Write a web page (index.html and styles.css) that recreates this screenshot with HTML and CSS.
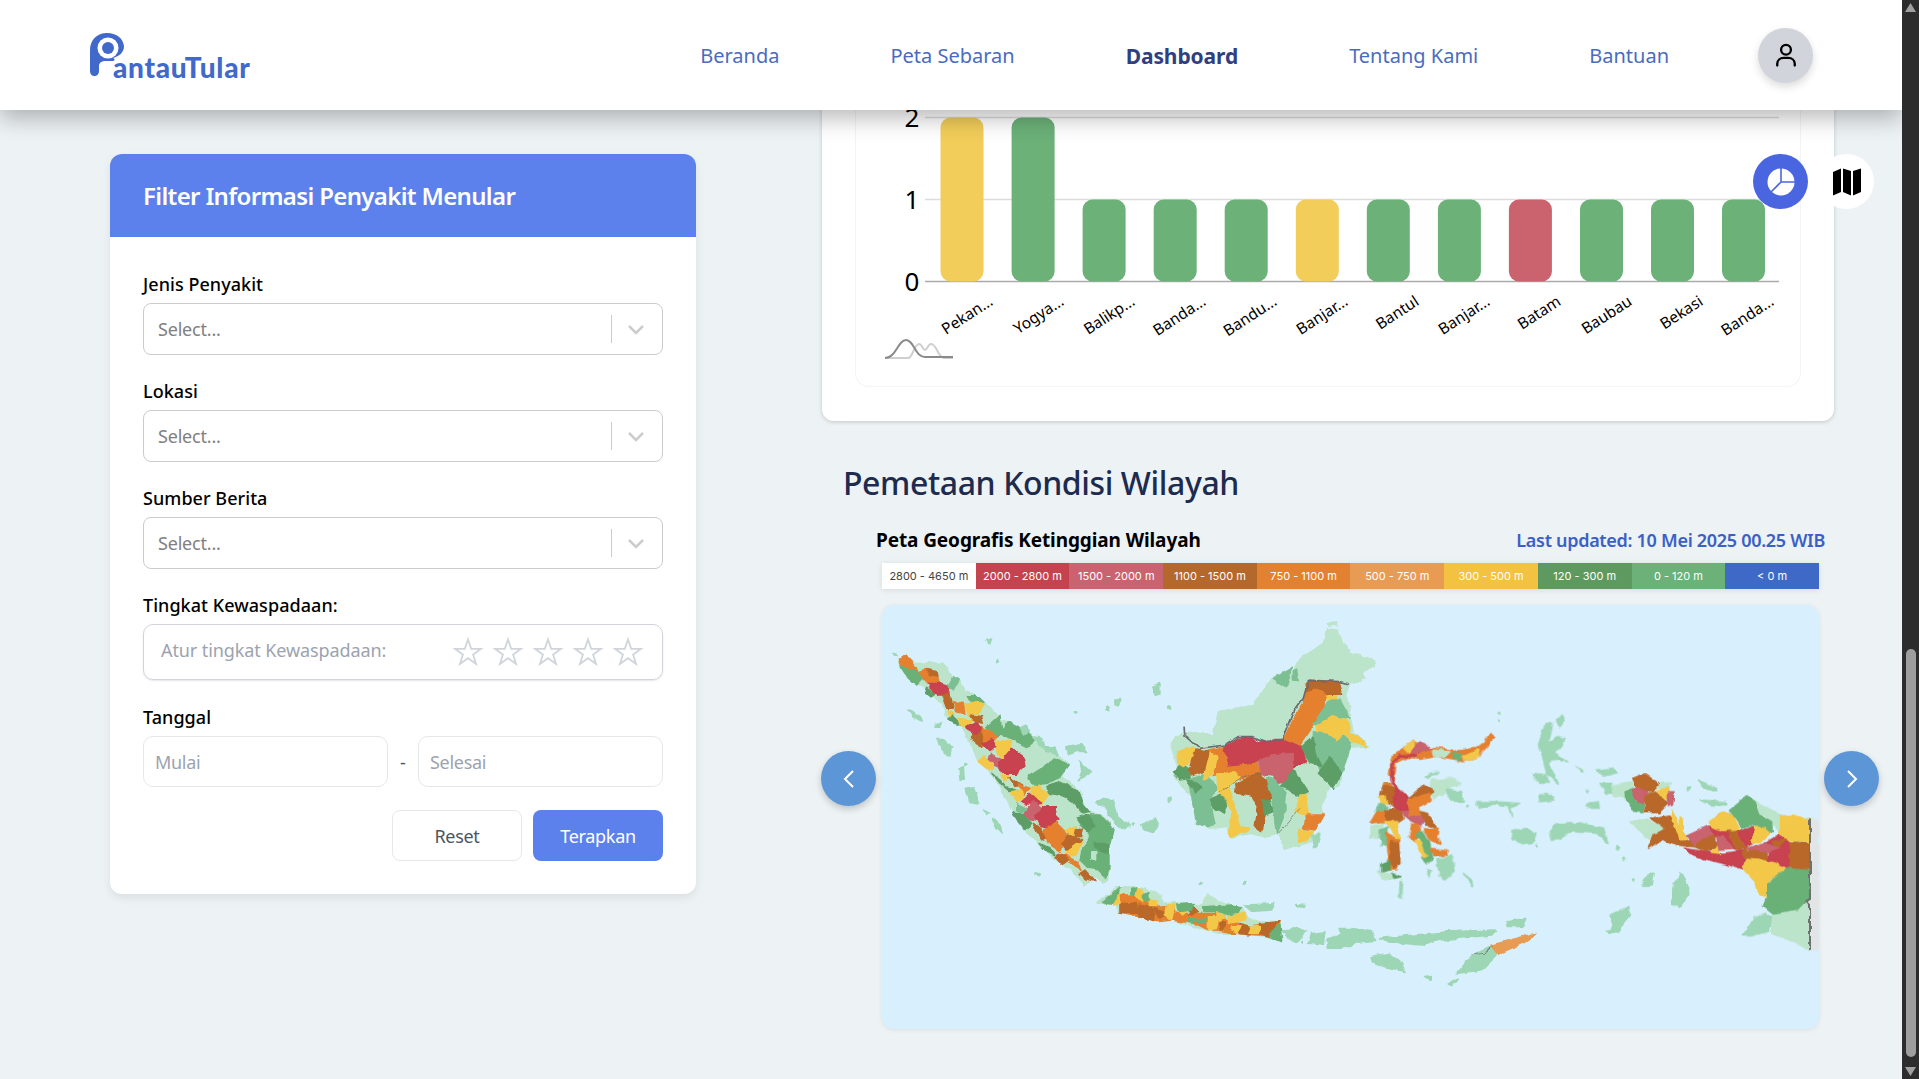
FILE: index.html
```html
<!DOCTYPE html>
<html lang="id">
<head>
<meta charset="utf-8">
<title>PantauTular - Dashboard</title>
<link rel="stylesheet" href="styles.css">
</head>
<body>
<div class="window">
  <div class="viewport">
    <header class="topbar">
      <a class="logo">
        <svg class="logo-mark" viewBox="0 0 36 44" width="36" height="44" aria-hidden="true">
          <path class="logo-blue" d="M18 0C8 0 1 7 1 17V38C1 41 3 43 5.500 43C8 43 10 41 10 38V32C11 29 13 28 16 28H24C26 28 26 25 24 25C30 23 35 20 35 13C34 5 27 0 18 0Z"/>
          <circle cx="19" cy="15" r="10.500" fill="#fff"/>
          <circle cx="19" cy="15" r="6" class="logo-blue"/>
        </svg>
        <span class="logo-text">antauTular</span>
      </a>
      <nav class="nav">
        <a class="nav-link">Beranda</a>
        <a class="nav-link">Peta Sebaran</a>
        <a class="nav-link active">Dashboard</a>
        <a class="nav-link">Tentang Kami</a>
        <a class="nav-link">Bantuan</a>
      </nav>
      <div class="avatar">
        <svg viewBox="0 0 24 24" width="28" height="28" fill="none" stroke="#000" stroke-width="2" stroke-linecap="round" aria-hidden="true"><circle cx="12" cy="7.500" r="4.200"/><path d="M4.500 21V19.500C4.500 16.500 7 14.500 10 14.500H14C17 14.500 19.500 16.500 19.500 19.500V21"/></svg>
      </div>
    </header>

    <main class="content">
      <aside class="filter-panel">
        <h2 class="filter-title">Filter Informasi Penyakit Menular</h2>
        <form class="filter-body">
          <div class="field">
            <label class="field-label">Jenis Penyakit</label>
            <div class="select"><span class="select-text">Select...</span><span class="select-sep"></span><svg class="chev" viewBox="0 0 20 20" width="20" height="20" aria-hidden="true"><path d="M3 7L10 14L17 7"/></svg></div>
          </div>
          <div class="field">
            <label class="field-label">Lokasi</label>
            <div class="select"><span class="select-text">Select...</span><span class="select-sep"></span><svg class="chev" viewBox="0 0 20 20" width="20" height="20" aria-hidden="true"><path d="M3 7L10 14L17 7"/></svg></div>
          </div>
          <div class="field">
            <label class="field-label">Sumber Berita</label>
            <div class="select"><span class="select-text">Select...</span><span class="select-sep"></span><svg class="chev" viewBox="0 0 20 20" width="20" height="20" aria-hidden="true"><path d="M3 7L10 14L17 7"/></svg></div>
          </div>
          <div class="field">
            <label class="field-label">Tingkat Kewaspadaan:</label>
            <div class="rating">
              <span class="rating-text">Atur tingkat Kewaspadaan:</span>
              <div class="stars">
                <svg class="star" viewBox="0 0 30 30" width="30" height="30" aria-hidden="true"><path d="M15 2.500L18.200 11.800H28L20.100 17.600L23.100 27L15 21.200L6.900 27L9.900 17.600L2 11.800H11.800Z"/></svg>
                <svg class="star" viewBox="0 0 30 30" width="30" height="30" aria-hidden="true"><path d="M15 2.500L18.200 11.800H28L20.100 17.600L23.100 27L15 21.200L6.900 27L9.900 17.600L2 11.800H11.800Z"/></svg>
                <svg class="star" viewBox="0 0 30 30" width="30" height="30" aria-hidden="true"><path d="M15 2.500L18.200 11.800H28L20.100 17.600L23.100 27L15 21.200L6.900 27L9.900 17.600L2 11.800H11.800Z"/></svg>
                <svg class="star" viewBox="0 0 30 30" width="30" height="30" aria-hidden="true"><path d="M15 2.500L18.200 11.800H28L20.100 17.600L23.100 27L15 21.200L6.900 27L9.900 17.600L2 11.800H11.800Z"/></svg>
                <svg class="star" viewBox="0 0 30 30" width="30" height="30" aria-hidden="true"><path d="M15 2.500L18.200 11.800H28L20.100 17.600L23.100 27L15 21.200L6.900 27L9.900 17.600L2 11.800H11.800Z"/></svg>
              </div>
            </div>
          </div>
          <div class="field field-date">
            <label class="field-label">Tanggal</label>
            <div class="date-row">
              <div class="date-input">Mulai</div>
              <span class="date-sep">-</span>
              <div class="date-input">Selesai</div>
            </div>
          </div>
          <div class="actions">
            <button class="btn btn-reset" type="button">Reset</button>
            <button class="btn btn-apply" type="button">Terapkan</button>
          </div>
        </form>
      </aside>

      <section class="right-col">
        <div class="chart-card">
          <div class="chart-inner">
            <svg class="chart" viewBox="855 0 946 387" width="946" height="387" role="img" aria-label="Grafik batang">
              <line class="grid grid-top" x1="925" y1="117.500" x2="1779" y2="117.500"/>
              <line class="grid" x1="925" y1="199.500" x2="1779" y2="199.500"/>
              <line class="axis" x1="925" y1="281.500" x2="1779" y2="281.500"/>
              <text class="ytick" x="912" y="126.500">2</text>
              <text class="ytick" x="912" y="208.500">1</text>
              <text class="ytick" x="912" y="290.500">0</text>
              <rect class="bar-y" x="940.500" y="117.500" width="43" height="164" rx="10"/>
              <rect class="bar-g" x="1011.600" y="117.500" width="43" height="164" rx="10"/>
              <rect class="bar-g" x="1082.600" y="199.500" width="43" height="82" rx="10"/>
              <rect class="bar-g" x="1153.700" y="199.500" width="43" height="82" rx="10"/>
              <rect class="bar-g" x="1224.700" y="199.500" width="43" height="82" rx="10"/>
              <rect class="bar-y" x="1295.800" y="199.500" width="43" height="82" rx="10"/>
              <rect class="bar-g" x="1366.800" y="199.500" width="43" height="82" rx="10"/>
              <rect class="bar-g" x="1437.900" y="199.500" width="43" height="82" rx="10"/>
              <rect class="bar-r" x="1508.900" y="199.500" width="43" height="82" rx="10"/>
              <rect class="bar-g" x="1580" y="199.500" width="43" height="82" rx="10"/>
              <rect class="bar-g" x="1651" y="199.500" width="43" height="82" rx="10"/>
              <rect class="bar-g" x="1722" y="199.500" width="43" height="82" rx="10"/>
              <text class="xtick" transform="translate(994 304) rotate(-33)">Pekan...</text>
              <text class="xtick" transform="translate(1065 304) rotate(-33)">Yogya...</text>
              <text class="xtick" transform="translate(1136 304) rotate(-33)">Balikp...</text>
              <text class="xtick" transform="translate(1207 304) rotate(-33)">Banda...</text>
              <text class="xtick" transform="translate(1278 304) rotate(-33)">Bandu...</text>
              <text class="xtick" transform="translate(1349 304) rotate(-33)">Banjar...</text>
              <text class="xtick" transform="translate(1420 304) rotate(-33)">Bantul</text>
              <text class="xtick" transform="translate(1491 304) rotate(-33)">Banjar...</text>
              <text class="xtick" transform="translate(1562 304) rotate(-33)">Batam</text>
              <text class="xtick" transform="translate(1633 304) rotate(-33)">Baubau</text>
              <text class="xtick" transform="translate(1704 304) rotate(-33)">Bekasi</text>
              <text class="xtick" transform="translate(1775 304) rotate(-33)">Banda...</text>
              <path class="bell-light" d="M885 358H908C913 358 914 344 919 344C922 344 923 350 925 350C927 350 928 344 931 344C937 344 938 358 944 358H953"/>
              <path class="bell-dark" d="M885 358C896 358 898 340 906 340C914 340 915 357 925 357H953"/>
            </svg>
          </div>
          <div class="view-switch">
            <button class="view-btn view-btn-on" type="button" aria-label="Grafik">
              <svg viewBox="0 0 28 28" width="28" height="28" aria-hidden="true"><circle cx="14" cy="14" r="13.500" fill="#fff"/><path d="M14 0V14L4 24M14 14H28" stroke="#4a65e0" stroke-width="1.600" fill="none"/></svg>
            </button>
            <button class="view-btn" type="button" aria-label="Peta">
              <svg viewBox="0 0 28 28" width="28" height="28" aria-hidden="true"><path d="M0 4L8 0.500V24L0 27.500ZM10 0.500L18 3V27.500L10 24ZM20 3L28 0.500V24L20 27.500Z"/></svg>
            </button>
          </div>
        </div>

        <h2 class="section-title">Pemetaan Kondisi Wilayah</h2>

        <div class="map-block">
          <div class="map-head">
            <h3 class="map-title">Peta Geografis Ketinggian Wilayah</h3>
            <span class="map-updated">Last updated: 10 Mei 2025 00.25 WIB</span>
          </div>
          <ul class="legend">
            <li class="lg lg-1">2800 - 4650 m</li>
            <li class="lg lg-2">2000 - 2800 m</li>
            <li class="lg lg-3">1500 - 2000 m</li>
            <li class="lg lg-4">1100 - 1500 m</li>
            <li class="lg lg-5">750 - 1100 m</li>
            <li class="lg lg-6">500 - 750 m</li>
            <li class="lg lg-7">300 - 500 m</li>
            <li class="lg lg-8">120 - 300 m</li>
            <li class="lg lg-9">0 - 120 m</li>
            <li class="lg lg-10">&lt; 0 m</li>
          </ul>
          <div class="map">
            <svg class="map-svg" viewBox="882 605 937 424" width="937" height="424" role="img" aria-label="Peta Indonesia">
              <defs>
                <filter id="coast" filterUnits="userSpaceOnUse" x="882" y="605" width="937" height="424">
                  <feTurbulence type="fractalNoise" baseFrequency=".11" numOctaves="2" seed="4" result="n"/>
                  <feDisplacementMap in="SourceGraphic" in2="n" scale="5" xChannelSelector="R" yChannelSelector="G" result="d"/>
                  <feGaussianBlur in="d" stdDeviation=".4"/>
                </filter>
              </defs>
              <g filter="url(#coast)">
              <g transform="translate(885 640) scale(.33333)">
                <polygon class="l" points="38,55 60,45 90,70 125,68 175,70 200,105 220,120 240,150 300,190 325,210 345,240 375,250 420,270 450,295 480,320 520,345 550,370 530,410 585,450 590,480 615,515 660,530 685,565 672,620 672,715 660,730 630,710 610,725 600,735 560,690 520,665 470,620 420,570 385,520 345,440 310,390 280,365 255,310 230,260 185,235 180,205 130,150 95,130 45,80"/>
                <polygon class="o" points="40,55 60,45 90,80 100,95 125,88 160,100 165,130 130,130 100,100 70,85 45,72"/>
                <polygon class="b" points="125,90 160,95 162,108 135,105"/>
                <polygon class="g" points="45,75 70,85 100,100 115,115 95,135 70,115"/>
                <polygon class="d" points="125,145 150,160 135,168 120,155"/>
                <polygon class="r" points="130,130 165,130 195,140 190,165 160,165 135,145"/>
                <polygon class="m" points="190,135 205,110 220,120 205,150"/>
                <polygon class="b" points="170,165 195,165 205,205 185,205"/>
                <polygon class="o" points="205,185 235,190 240,220 215,215"/>
                <polygon class="g" points="250,170 280,170 300,190 265,195"/>
                <polygon class="y" points="240,195 270,185 300,195 275,220 250,225"/>
                <polygon class="y" points="190,210 210,220 195,235"/>
                <polygon class="d" points="185,240 205,225 225,255 205,250"/>
                <polygon class="y" points="220,235 260,240 245,260 225,255"/>
                <polygon class="b" points="255,225 290,230 295,250 270,245"/>
                <polygon class="g" points="305,260 345,225 350,275 372,245 400,260 440,290 450,300 425,320 395,305 365,290 345,285 330,290"/>
                <polygon class="o" points="270,270 290,260 310,270 335,290 300,310 285,320"/>
                <polygon class="b" points="255,295 285,265 295,300 285,320"/>
                <polygon class="r" points="245,260 270,245 290,265 275,285 250,270"/>
                <polygon class="r" points="290,310 320,295 332,320 315,335"/>
                <polygon class="p" points="320,340 345,355 345,385 320,375 312,355"/>
                <polygon class="r" points="360,340 380,325 410,345 420,375 395,400 350,400 340,365"/>
                <polygon class="y" points="330,300 380,305 375,325 350,355 335,335"/>
                <polygon class="y" points="280,365 300,350 325,370 325,390 305,385"/>
                <polygon class="d" points="320,400 345,420 360,440 395,450 375,455 345,430"/>
                <polygon class="y" points="345,405 372,405 362,425"/>
                <polygon class="b" points="372,410 410,435 390,440"/>
                <polygon class="o" points="400,435 435,445 420,460"/>
                <polygon class="y" points="380,455 410,450 420,465 400,485 385,475"/>
                <polygon class="g" points="430,410 470,385 520,355 550,375 525,410 490,430 440,435"/>
                <polygon class="d" points="485,440 520,425 580,450 595,490 615,515 590,520 550,475 525,465 490,460"/>
                <polygon class="y" points="435,445 460,435 490,465 470,495 445,465"/>
                <polygon class="r" points="412,480 435,460 470,490 450,495 420,495"/>
                <polygon class="p" points="415,525 445,485 475,510 450,540 430,535"/>
                <polygon class="r" points="450,530 475,500 515,500 510,525 525,540 490,565 465,560"/>
                <polygon class="d" points="380,520 410,520 440,550 420,572"/>
                <polygon class="m" points="395,490 425,505 410,520 395,510"/>
                <polygon class="b" points="445,550 470,570 490,590 470,600"/>
                <polygon class="d" points="465,610 495,625 510,645 480,630"/>
                <polygon class="g" points="575,535 600,525 645,525 685,565 672,620 672,680 665,715 640,690 610,685 585,660 590,635 610,610 610,575 590,560"/>
                <polygon class="d" points="575,535 610,525 630,555 610,575"/>
                <polygon class="d" points="625,610 670,610 670,640 640,630"/>
                <polygon class="l" points="620,635 635,635 635,660 620,655"/>
                <polygon class="o" points="475,570 520,550 550,590 530,620 525,635 490,610"/>
                <polygon class="y" points="545,575 570,560 580,585 560,590"/>
                <polygon class="b" points="575,565 595,570 590,590 570,590"/>
                <polygon class="b" points="530,610 550,585 590,600 545,630"/>
                <polygon class="y" points="540,635 575,610 595,605 575,640 555,650"/>
                <polygon class="o" points="540,645 575,665 590,690 560,670"/>
                <polygon class="b" points="510,650 530,640 550,660 530,675"/>
                <polygon class="b" points="585,700 600,690 630,725 600,715"/>
                <polygon class="i" points="68,210 110,230 115,243 85,232"/>
                <polygon class="i" points="155,295 175,295 200,320 195,345 175,340"/>
                <polygon class="i" points="240,445 265,440 282,490 255,485"/>
                <polygon class="i" points="295,510 315,520 310,525"/>
                <polygon class="i" points="322,535 345,555 352,582 335,565"/>
                <polygon class="i" points="630,490 655,475 685,480 700,530 735,555 710,570 680,540 660,500"/>
                <polygon class="i" points="770,550 810,535 820,555 805,578 775,570"/>
                <polygon class="i" points="545,320 590,310 608,335 575,335 550,345"/>
                <polygon class="i" points="585,365 620,395 595,410 580,420 590,395"/>
                <polygon class="i" points="800,140 825,130 825,160 810,168"/>
                <polygon class="i" points="445,290 470,295 480,320 510,320 520,345 485,335"/>
                <polygon class="i" points="405,265 425,255 430,275 415,285"/>
                <polygon class="i" points="692,180 704,178 702,198 693,196"/>
                <polygon class="i" points="662,198 672,198 672,212 662,212"/>
                <polygon class="i" points="222,385 235,380 238,415 225,418"/>
                <polygon class="i" points="150,250 165,248 165,262 150,262"/>
                <polygon class="i" points="450,698 466,702 464,708 450,704"/>
                <polygon class="i" points="305,0 320,0 315,12"/>
                <circle class="i" cx="338" cy="62" r="4"/>
                <circle class="i" cx="572" cy="215" r="4"/>
                <circle class="i" cx="852" cy="205" r="4"/>
                <circle class="i" cx="850" cy="480" r="4"/>
                <circle class="i" cx="30" cy="42" r="4"/>
                <circle class="i" cx="245" cy="374" r="4"/>
                <circle class="i" cx="745" cy="552" r="3"/>
              </g>
              <g transform="translate(1160 610) scale(.33333)">
                <polygon class="l" points="30,400 70,365 160,375 175,305 280,285 340,200 400,185 420,145 490,100 500,55 530,60 570,130 650,150 640,170 610,185 615,205 570,225 560,260 570,320 580,370 630,410 570,415 545,500 540,525 510,530 480,600 490,615 460,660 455,695 375,720 355,670 310,680 270,670 210,685 205,650 150,655 110,640 95,560 60,520 45,500 50,460"/>
                <polygon class="g2" points="85,510 130,495 175,530 150,570 165,640 145,650 110,640 95,560"/>
                <polygon class="d" points="40,485 65,460 90,480 90,505 60,510"/>
                <polygon class="d" points="80,510 105,515 125,530 105,550"/>
                <polygon class="d" points="150,570 185,555 205,575 190,610 165,600"/>
                <polygon class="y" points="50,430 100,410 110,440 70,470 55,460"/>
                <polygon class="b" points="105,420 145,425 155,440 130,485 95,498 88,475"/>
                <polygon class="o" points="145,420 195,410 200,465 250,460 295,458 300,490 240,510 225,490 175,495 160,500 170,440"/>
                <polygon class="y" points="150,430 172,440 160,495 130,510"/>
                <polygon class="r" points="195,410 235,385 275,380 285,395 320,395 345,385 370,385 425,410 440,455 390,480 400,430 330,435 300,455 250,460 205,465"/>
                <polygon class="p" points="300,455 330,435 400,430 400,480 390,515 355,520 340,495 300,490"/>
                <polygon class="y" points="170,495 225,485 240,505 205,525 240,650 268,655 260,665 208,682 215,610 200,565 175,545"/>
                <polygon class="b" points="225,525 295,490 320,510 335,540 330,570 310,585 320,610 305,665 285,650 295,590 275,560 225,545"/>
                <polygon class="d" points="305,570 330,570 340,605 315,615"/>
                <polygon class="g2" points="320,500 340,505 375,545 375,610 350,675 345,640 340,580"/>
                <polygon class="d" points="365,530 400,480 420,505 445,545 415,555"/>
                <polygon class="y" points="420,555 435,555 447,620 405,605"/>
                <polygon class="o" points="440,615 490,615 465,660 430,655"/>
                <polygon class="y" points="420,660 460,665 440,695 412,700"/>
                <polygon class="i" points="455,680 480,670 470,715 460,712"/>
                <polygon class="o" points="375,385 405,320 430,280 440,225 470,235 500,250 495,285 465,340 420,405"/>
                <polygon class="b" points="435,220 450,210 535,215 545,250 500,250 470,232 440,245"/>
                <polygon class="y" points="500,255 530,255 530,270 500,268"/>
                <polygon class="g2" points="460,340 510,270 540,270 570,325 520,320 475,345"/>
                <polygon class="g2" points="460,365 510,370 530,395 550,375 575,395 570,415 545,490 520,530 480,480 460,430"/>
                <polygon class="y" points="470,345 520,318 560,330 570,365 625,410 590,400 550,370 530,395 510,370 470,365"/>
                <polygon class="d" points="425,410 460,380 465,430 485,470 450,460"/>
                <polygon class="d" points="475,490 510,440 545,490 520,535"/>
                <polygon class="g2" points="340,205 395,172 380,230"/>
                <polygon class="g2" points="400,185 410,180 415,212 400,210"/>
                <polyline class="border" points="72,350 75,375 120,415 195,405 235,380 275,380 320,395 370,385 405,300 430,265 445,212 535,215 570,222"/>
                <polyline class="border-thin" points="180,545 240,505 300,490"/>
                <polyline class="border-thin" points="355,670 420,595"/>
                <circle class="i" cx="30" cy="568" r="4"/>
                <circle class="i" cx="28" cy="295" r="4"/>
                <polygon class="l" points="505,40 530,35 530,45 510,48"/>
                <circle class="i" cx="255" cy="818" r="4"/>
              </g>
              <g transform="translate(1370 700) scale(.33333)">
                <polygon class="l" points="185,240 250,235 270,250 240,265 215,285 190,295 180,260"/>
                <polygon class="l" points="0,380 40,370 30,415 0,415"/>
                <polygon class="l" points="25,515 90,530 45,540"/>
                <polygon class="o" points="70,165 110,140 125,125 190,145 250,150 320,145 345,125 360,100 378,110 350,140 325,170 280,185 250,180 195,170 150,178 100,175 75,190 70,240 55,220"/>
                <polygon class="p" points="125,140 150,128 185,145 150,155 125,165"/>
                <polygon class="y" points="105,145 125,125 130,130 120,160"/>
                <polygon class="l" points="190,150 240,155 225,172 195,172"/>
                <polygon class="y" points="275,170 330,150 325,170 285,182"/>
                <polygon class="g" points="250,155 275,160 270,182 250,175"/>
                <polyline class="neck" points="140,170 90,165 65,195 65,240 80,260"/>
                <polygon class="o" points="42,250 65,250 60,290 30,290"/>
                <polygon class="b" points="40,260 80,260 90,290 70,320 30,290"/>
                <polygon class="y" points="25,290 45,285 50,310 35,310"/>
                <polygon class="m" points="15,335 30,310 55,320 45,335"/>
                <polygon class="o" points="0,370 20,335 50,335 50,365 30,365"/>
                <polygon class="b" points="45,330 90,325 100,355 70,375 50,360"/>
                <polygon class="r" points="75,260 110,290 120,330 95,335 70,320"/>
                <polygon class="p" points="95,335 130,335 170,355 155,380 115,360"/>
                <polygon class="b" points="115,295 160,255 190,275 175,290 130,300"/>
                <polygon class="o" points="115,300 180,280 180,300 145,320 150,345 120,345"/>
                <polygon class="b" points="150,335 175,340 200,385 170,375"/>
                <polygon class="m" points="30,390 55,380 50,440 35,435"/>
                <polygon class="o" points="50,400 85,415 90,480 80,510 60,510 50,450"/>
                <polygon class="b" points="60,420 85,430 90,490 75,508 60,490"/>
                <polygon class="y" points="45,365 80,365 90,415 75,415 70,390"/>
                <polygon class="d" points="35,490 60,480 60,510 35,515"/>
                <polygon class="d" points="65,520 90,530 70,535"/>
                <polygon class="o" points="125,375 145,375 150,400 135,425 118,410"/>
                <polygon class="o" points="160,390 205,385 200,410 210,430 180,420"/>
                <polygon class="g" points="135,400 155,395 180,430 185,480 165,490 155,475 170,465 155,430"/>
                <polygon class="y" points="135,420 155,430 170,470 160,475 150,445"/>
                <polygon class="o" points="180,445 235,450 230,465 190,470"/>
                <polygon class="i" points="200,480 245,465 255,510 225,540 210,525"/>
                <polygon class="i" points="170,505 185,515 180,530"/>
                <polygon class="i" points="230,270 275,275 280,305 245,300"/>
                <polygon class="i" points="320,305 370,305 450,310 420,320 425,350 415,320 370,315 325,325"/>
                <polygon class="i" points="550,375 640,368 700,385 715,430 680,400 610,395 570,415 545,425 540,405"/>
                <polygon class="i" points="425,395 465,385 498,400 490,425 460,432 430,420"/>
                <polygon class="i" points="505,135 525,75 548,70 535,130 560,110 585,115 575,140 555,160 590,185 545,175 535,190 565,250 530,220 515,165"/>
                <polygon class="i" points="555,60 578,45 585,60 570,80"/>
                <polygon class="i" points="490,220 530,225 535,250 505,250"/>
                <polygon class="i" points="505,285 530,280 552,300 510,305"/>
                <polygon class="i" points="645,315 685,305 688,325 665,325"/>
                <polygon class="i" points="680,210 725,205 742,220 700,232"/>
                <polygon class="i" points="690,250 725,250 728,280 708,280"/>
                <polygon class="i" points="165,230 205,215 175,235"/>
                <polygon class="i" points="90,545 98,545 95,595 88,590"/>
                <polygon class="i" points="280,520 305,540 308,560 285,530"/>
                <polygon class="i" points="620,200 640,212 635,216"/>
                <circle class="i" cx="387" cy="40" r="3"/>
                <circle class="i" cx="386" cy="62" r="2"/>
                <circle class="i" cx="652" cy="272" r="3"/>
                <circle class="i" cx="500" cy="438" r="3"/>
                <circle class="i" cx="740" cy="442" r="4"/>
                <circle class="i" cx="292" cy="320" r="3"/>
              </g>
              <g transform="translate(1590 760) scale(.33333)">
                <polygon class="edge" points="658,175 685,180 685,570 660,570"/>
                <polygon class="l" points="65,75 125,65 140,130 125,140 105,115 70,105"/>
                <polygon class="l" points="215,65 245,70 235,90 200,80"/>
                <polygon class="b" points="125,55 165,42 205,70 190,95 165,100 135,75"/>
                <polygon class="g" points="108,95 125,85 135,125 160,130 160,155 130,150 110,120"/>
                <polygon class="p" points="125,90 145,80 175,100 160,130 140,125"/>
                <polygon class="b" points="165,110 200,95 235,130 210,155 165,155"/>
                <polygon class="y" points="200,90 235,85 242,115 225,118"/>
                <polygon class="p" points="235,95 252,95 248,135 235,140"/>
                <polygon class="l" points="122,185 170,180 210,200 225,205 185,240 165,230"/>
                <polygon class="b" points="180,175 240,165 270,235 300,245 310,260 260,255 220,235 175,265 190,225 225,205"/>
                <polygon class="y" points="245,150 290,235 270,237 250,185"/>
                <polygon class="y" points="270,170 280,180 280,205 272,200"/>
                <polygon class="p" points="290,225 355,195 385,210 360,235 310,255 300,245"/>
                <polygon class="r" points="285,265 340,275 400,280 470,270 460,330 400,310 340,295 300,280"/>
                <polygon class="b" points="310,260 370,225 380,260 350,275"/>
                <polygon class="r" points="360,195 415,210 445,270 430,265 400,225 375,235"/>
                <polygon class="p" points="380,230 400,230 430,265 385,268"/>
                <polygon class="y" points="365,270 380,260 392,280 365,277"/>
                <polygon class="b" points="415,210 455,210 470,265 440,270"/>
                <polygon class="r" points="445,215 490,200 490,250 470,260"/>
                <polygon class="l" points="490,120 570,165 660,175 570,170 570,215 545,190 510,160"/>
                <polygon class="y" points="495,198 515,195 545,215 510,248 485,248"/>
                <polygon class="y" points="358,185 400,155 430,170 448,205 400,212 370,200"/>
                <polygon class="g" points="415,155 470,110 495,125 510,165 545,185 547,215 510,195 490,195 455,205 440,175"/>
                <polygon class="y" points="568,170 610,165 655,178 658,245 600,240 570,225"/>
                <polygon class="r" points="525,250 565,225 600,245 600,325 530,300 540,270"/>
                <polygon class="b" points="545,245 590,235 560,265"/>
                <polygon class="p" points="470,265 530,250 565,265 530,280 480,270"/>
                <polygon class="b" points="462,270 530,280 530,300 460,295"/>
                <polygon class="b" points="600,245 658,250 658,338 600,325"/>
                <polygon class="y" points="458,325 470,295 530,300 590,325 535,365 530,410 510,405 495,365"/>
                <polygon class="g" points="530,375 590,325 658,332 658,405 655,430 625,450 550,460 520,435 530,410"/>
                <polygon class="l" points="545,465 625,450 655,430 660,570 600,540 545,520"/>
                <polygon class="i" points="460,525 490,475 530,460 545,470 535,510 510,525"/>
                <polyline class="border-edge" points="660,175 660,415 652,425 660,435 660,570"/>
                <polygon class="i" points="245,430 250,370 270,340 295,395 275,435 245,435"/>
                <polygon class="i" points="60,465 115,440 100,490 70,500"/>
                <polygon class="i" points="50,515 75,505 60,520"/>
                <polygon class="i" points="165,355 190,340 175,375 160,375"/>
                <polygon class="i" points="325,60 380,85 380,95 345,85"/>
                <polygon class="i" points="330,120 410,125 410,135 360,135"/>
                <circle class="i" cx="295" cy="85" r="4"/>
                <circle class="i" cx="82" cy="262" r="4"/>
                <circle class="i" cx="104" cy="298" r="3"/>
                <circle class="i" cx="130" cy="362" r="3"/>
              </g>
              <g transform="translate(1085 870) scale(.33333)">
                <polygon class="l" points="35,95 75,75 95,50 145,50 210,65 235,95 350,105 365,75 400,95 470,110 490,150 585,155 590,195 590,215 550,200 450,190 400,190 330,170 260,150 220,155 160,140 105,130 90,100 40,100"/>
                <polygon class="o" points="105,75 150,75 200,110 265,105 270,130 330,130 380,130 400,130 420,150 500,170 585,155 570,195 520,195 450,190 400,180 370,180 330,160 260,150 220,155 160,140 105,130"/>
                <polygon class="b" points="105,100 150,100 160,130 105,130"/>
                <polygon class="b" points="160,105 210,115 205,155 160,140"/>
                <polygon class="b" points="210,115 245,130 225,145"/>
                <polygon class="b" points="320,105 340,125 310,135"/>
                <polygon class="b" points="520,160 585,155 570,170 555,200 520,190"/>
                <polygon class="b" points="465,160 495,170 495,195 465,190"/>
                <polygon class="b" points="400,155 425,160 410,180"/>
                <polygon class="y" points="78,75 105,70 105,100 85,105"/>
                <polygon class="y" points="155,50 175,65 170,95 150,75"/>
                <polygon class="y" points="190,90 215,85 215,110 190,110"/>
                <polygon class="y" points="245,100 270,105 260,150 240,130"/>
                <polygon class="y" points="280,125 300,125 290,135"/>
                <polygon class="y" points="370,140 395,140 395,175 370,180"/>
                <polygon class="y" points="395,130 420,140 400,155"/>
                <polygon class="y" points="430,140 480,130 480,150 430,160"/>
                <polygon class="y" points="440,170 470,170 460,190"/>
                <polygon class="y" points="495,170 525,170 520,190 495,190"/>
                <polygon class="g" points="55,95 80,75 105,50 100,70 80,100"/>
                <polygon class="g" points="140,55 155,50 150,75 140,75"/>
                <polygon class="g" points="175,70 195,65 195,95 175,95"/>
                <polygon class="g" points="275,105 325,100 320,120 280,125"/>
                <polygon class="g" points="355,110 440,105 470,110 460,130 420,135 400,125 360,125"/>
                <polygon class="g" points="310,145 330,145 325,160 312,158"/>
                <polygon class="g" points="335,150 365,145 365,160 340,160"/>
                <polygon class="g" points="555,185 585,165 590,215 555,200"/>
                <polygon class="l" points="105,55 130,55 135,70 110,70"/>
                <polygon class="l" points="200,70 230,80 215,90 200,85"/>
                <polygon class="i" points="480,105 570,100 560,120 500,125"/>
                <polygon class="i" points="590,180 640,175 665,185 630,220 600,195"/>
                <polygon class="i" points="680,190 720,185 715,225 670,220"/>
                <polygon class="i" points="725,210 770,195 765,175 800,175 860,185 870,215 810,220 770,235 730,235"/>
                <polygon class="i" points="855,260 910,250 950,280 960,305 900,290 860,275"/>
                <polygon class="i" points="632,100 660,103 655,112 635,110"/>
                <circle class="i" cx="480" cy="38" r="4"/>
                <circle class="i" cx="348" cy="40" r="3"/>
                <circle class="i" cx="652" cy="214" r="3"/>
              </g>
              <g transform="translate(860 800) scale(.6754 .33333)">
                <polygon class="i" points="770,415 870,395 940,390 935,405 860,420 830,435 780,425"/>
                <polygon class="i" points="885,520 905,470 938,435 945,460 920,510"/>
                <polygon class="orange-soft" points="935,435 1000,400 985,425 945,462"/>
                <polygon class="i" points="960,365 985,355 980,380 958,380"/>
                <polygon class="i" points="870,555 885,535 875,560"/>
                <polygon class="i" points="835,530 845,526 845,538"/>
                <polygon class="i" points="1110,400 1135,325 1140,345 1120,395"/>
                <polygon class="i" points="1205,300 1215,220 1228,280 1215,320"/>
                <polygon class="i" points="1160,255 1175,220 1172,255"/>
                <polyline class="border-thin" points="905,465 925,460 938,437"/>
              </g>
              </g>
            </svg>
          </div>
          <button class="arrow arrow-left" type="button" aria-label="Sebelumnya"><svg viewBox="0 0 20 20" width="20" height="20" aria-hidden="true"><path d="M14 2L6 10L14 18"/></svg></button>
          <button class="arrow arrow-right" type="button" aria-label="Berikutnya"><svg viewBox="0 0 20 20" width="20" height="20" aria-hidden="true"><path d="M6 2L14 10L6 18"/></svg></button>
        </div>
      </section>
    </main>
  </div>
  <div class="scrollbar">
    <svg class="sb-arrow" viewBox="0 0 17 15" width="17" height="15" aria-hidden="true"><path d="M3 12L8.500 3L14 12Z"/></svg>
    <div class="sb-track"><div class="sb-thumb"></div></div>
    <svg class="sb-arrow" viewBox="0 0 17 15" width="17" height="15" aria-hidden="true"><path d="M3 3L8.500 12L14 3Z"/></svg>
  </div>
</div>
</body>
</html>
```

FILE: styles.css
```css
* { box-sizing: border-box; }
html, body { margin: 0; padding: 0; height: 100%; overflow: hidden; }
body { font-family: "Noto Sans", "Open Sans", sans-serif; background: #edf2f5; color: #000; }
button { font-family: inherit; }
.window { display: flex; height: 1079px; }
.viewport { position: relative; flex: 1; min-width: 0; height: 1079px; overflow: hidden; }

.topbar { position: absolute; z-index: 5; top: 0; left: 0; right: 0; height: 110px; display: flex; align-items: center; padding: 0 89px 0 89px; background: #fff; box-shadow: 0 8px 22px rgba(0, 0, 0, .28); }
.logo { display: flex; align-items: flex-end; height: 44px; margin-top: 0; }
.logo-mark { display: block; flex: none; }
.logo-blue { fill: #4169cc; }
.logo-text { margin-left: -12px; font-family: "Lato", sans-serif; font-weight: 900; font-size: 28px; line-height: 20px; color: #4169cc; letter-spacing: .7px; }
.nav { display: flex; gap: 111px; margin-left: auto; margin-top: 2px; }
.nav-link { font-size: 20px; line-height: 28px; color: #4a6bc0; }
.nav-link.active { font-size: 21px; font-weight: 700; color: #2f3f80; letter-spacing: -.1px; }
.avatar { margin-left: 89px; width: 55px; height: 55px; border-radius: 50%; background: #d1d5db; display: flex; align-items: center; justify-content: center; box-shadow: 0 4px 8px rgba(0, 0, 0, .14); }

.content { display: grid; grid-template-columns: 586px 1012px; column-gap: 126px; padding-left: 110px; }

.filter-panel { margin-top: 154px; align-self: start; background: #fff; border-radius: 12px; box-shadow: 0 4px 10px rgba(0, 0, 0, .08); overflow: hidden; }
.filter-title { margin: 0; height: 83px; padding: 0 33px; display: flex; align-items: center; background: #5d81ec; color: #fff; font-size: 24px; font-weight: 600; letter-spacing: -.65px; }
.filter-body { padding: 35px 33px 33px; display: flex; flex-direction: column; gap: 24px; }
.field { display: flex; flex-direction: column; gap: 7px; }
.field-date { margin-top: 1px; }
.field-label { font-size: 18px; line-height: 24px; font-weight: 500; letter-spacing: .05px; }
.select { height: 52px; display: flex; align-items: center; padding-left: 14px; border: 1px solid #ccc; border-radius: 8px; background: #fff; }
.select-text { flex: 1; font-size: 18px; color: #808080; letter-spacing: -.2px; }
.select-sep { width: 1px; height: 28px; background: #ccc; }
.chev { margin: 0 16px 0 14px; }
.chev path { fill: none; stroke: #ccc; stroke-width: 2.500; }
.rating { height: 56px; display: flex; align-items: center; justify-content: space-between; padding: 0 19px 0 17px; border: 1px solid #d1d5db; border-radius: 10px; box-shadow: 0 1px 2px rgba(0, 0, 0, .1); }
.rating-text { font-size: 18px; color: #9ca3af; letter-spacing: -.1px; margin-top: -4px; }
.stars { display: flex; gap: 10px; }
.star { display: block; }
.star path { fill: none; stroke: #d1d5db; stroke-width: 1.800; }
.date-row { display: flex; align-items: center; }
.date-input { flex: 1; height: 51px; display: flex; align-items: center; padding-left: 11px; border: 1px solid #e5e7eb; border-radius: 10px; font-size: 18px; color: #9ca3af; letter-spacing: -.3px; }
.date-sep { width: 30px; text-align: center; font-size: 18px; color: #4b5563; }
.actions { display: flex; justify-content: flex-end; gap: 11px; margin-top: -1px; }
.btn { width: 130px; height: 51px; border-radius: 8px; font-size: 18px; letter-spacing: -.3px; cursor: pointer; }
.btn-reset { background: #fff; border: 1px solid #e5e7eb; color: #4b5563; }
.btn-apply { background: #5d81ec; border: 0; color: #fff; }

.right-col { display: flex; flex-direction: column; }
.chart-card { position: relative; height: 421px; padding: 0 33px 34px; background: #fff; border-radius: 0 0 12px 12px; box-shadow: 0 1px 4px rgba(0, 0, 0, .18); }
.chart-inner { height: 387px; border: 1px solid #f3f4f6; border-top: 0; border-radius: 0 0 14px 14px; }
.chart { display: block; margin: 0 -1px; }
.grid { stroke: #dcdcdc; stroke-width: 1.500; }
.axis { stroke: #aaa; stroke-width: 1.500; }
.ytick { font-family: "Noto Sans", sans-serif; font-size: 26px; text-anchor: middle; fill: #000; }
.xtick { font-family: "Noto Sans", sans-serif; font-size: 15.500px; text-anchor: end; fill: #000; }
.bar-y { fill: #f2cd5a; }
.bar-g { fill: #6bb178; }
.bar-r { fill: #cb636e; }
.bell-dark { fill: none; stroke: #8a8a8a; stroke-width: 2; }
.bell-light { fill: none; stroke: #cfcfcf; stroke-width: 2; }
.view-switch { position: absolute; top: 154px; right: -40px; display: flex; gap: 11px; z-index: 1; }
.view-btn { width: 55px; height: 55px; padding: 0; border: 0; border-radius: 50%; background: #fff; display: flex; align-items: center; justify-content: center; }
.view-btn-on { background: #4a65e0; }

.section-title { margin: 42px 0 0 21px; font-size: 32px; line-height: 40px; font-weight: 500; color: #1d2b4f; letter-spacing: -.4px; }
.map-block { position: relative; margin-top: 23px; padding: 0 15px 0 60px; }
.map-head { display: flex; align-items: center; justify-content: space-between; height: 28px; margin: 0 -6px 0 -6px; }
.map-title { margin: 0; font-size: 19px; line-height: 28px; font-weight: 700; letter-spacing: -.1px; }
.map-updated { font-size: 18px; font-weight: 600; color: #3a60c8; letter-spacing: -.3px; }
.legend { list-style: none; display: grid; grid-template-columns: repeat(10, 1fr); margin: 9px 0 0; padding: 0; height: 26px; box-shadow: 0 1px 6px rgba(0, 0, 0, .1); }
.lg { display: flex; align-items: center; justify-content: center; font-family: "Inter", sans-serif; font-size: 11px; color: #fff; }
.lg-1 { background: #fff; color: #444; }
.lg-2 { background: #c5424f; }
.lg-3 { background: #c9636f; }
.lg-4 { background: #b5682c; }
.lg-5 { background: #e2812f; }
.lg-6 { background: #e89b52; }
.lg-7 { background: #f2c240; }
.lg-8 { background: #5e9a60; }
.lg-9 { background: #6bb178; }
.lg-10 { background: #3f69c6; }
.map { margin-top: 16px; height: 424px; border-radius: 12px; background: #d8effd; box-shadow: 0 1px 5px rgba(0, 0, 0, .08); overflow: hidden; }
.map-svg { display: block; }
.map-svg polygon, .map-svg circle { stroke-width: 4; stroke-linejoin: round; }
.l { fill: #bce4cb; stroke: #bce4cb; }
.m, .g2 { fill: #7cbf93; stroke: #7cbf93; }
.g { fill: #6bb178; stroke: #6bb178; }
.d { fill: #5d9e66; stroke: #5d9e66; }
.r { fill: #c8424f; stroke: #c8424f; }
.p { fill: #c9636e; stroke: #c9636e; }
.b { fill: #b9682a; stroke: #b9682a; }
.o { fill: #e5812f; stroke: #e5812f; }
.y { fill: #f3c84a; stroke: #f3c84a; }
.i { fill: #9dd6b5; stroke: #9dd6b5; }
.orange-soft { fill: #e89b52; stroke: #e89b52; }
.edge { fill: #e2e5e5; stroke: #e2e5e5; }
.border { fill: none; stroke: #6a6a70; stroke-width: 5; }
.border-thin { fill: none; stroke: #6a6a70; stroke-width: 2; }
.border-edge { fill: none; stroke: #707070; stroke-width: 6; }
.neck { fill: none; stroke: #c8424f; stroke-width: 9; }
.arrow { position: absolute; top: 225px; width: 55px; height: 55px; padding: 0; border: 0; border-radius: 50%; background: #5d96d6; display: flex; align-items: center; justify-content: center; box-shadow: 0 3px 7px rgba(0, 0, 0, .2); z-index: 2; }
.arrow path { fill: none; stroke: #fff; stroke-width: 2; }
.arrow-left { left: -1px; }
.arrow-right { right: -45px; }

.scrollbar { flex: none; width: 17px; height: 1079px; background: #2c2c2c; display: flex; flex-direction: column; }
.sb-arrow { display: block; flex: none; }
.sb-arrow path { fill: #a0a0a0; }
.sb-track { flex: 1; display: flex; flex-direction: column; padding: 634px 1px 7px 4px; }
.sb-thumb { flex: 1; border-radius: 6px; background: #9e9e9e; width: 10px; }
```
